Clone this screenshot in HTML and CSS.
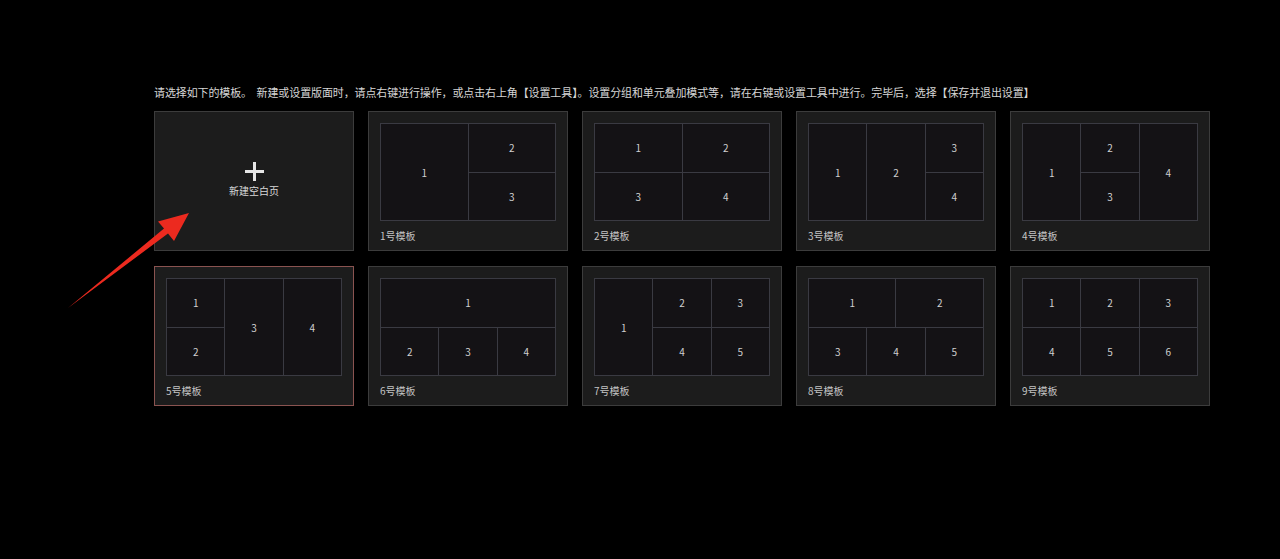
FILE: index.html
```html
<!DOCTYPE html>
<html lang="zh-CN">
	<head>
		<meta charset="UTF-8" />
		<meta name="viewport" content="width=device-width, initial-scale=1.0" />
		<title>选择模板</title>
		<link rel="stylesheet" href="styles.css">
	</head>
	<body>
		<div class="page">
			<p class="tip">请选择如下的模板。&nbsp; 新建或设置版面时，请点右键进行操作，或点击右上角【设置工具】。设置分组和单元叠加模式等，请在右键或设置工具中进行。完毕后，选择【保存并退出设置】</p>

			<div class="grid">
				<div class="card card-new">
					<svg class="plus" width="19" height="19" viewBox="0 0 19 19">
						<rect x="8" y="0" width="3" height="19" fill="#e6e6e6" />
						<rect x="0" y="8" width="19" height="3" fill="#e6e6e6" />
					</svg>
					<span class="new-text">新建空白页</span>
				</div>

				<div class="card">
					<div class="preview t1">
						<div class="cell tall">1</div>
						<div class="cell">2</div>
						<div class="cell">3</div>
					</div>
					<div class="name">1号模板</div>
				</div>

				<div class="card">
					<div class="preview t2">
						<div class="cell">1</div>
						<div class="cell">2</div>
						<div class="cell">3</div>
						<div class="cell">4</div>
					</div>
					<div class="name">2号模板</div>
				</div>

				<div class="card">
					<div class="preview t3">
						<div class="cell tall">1</div>
						<div class="cell tall">2</div>
						<div class="cell">3</div>
						<div class="cell">4</div>
					</div>
					<div class="name">3号模板</div>
				</div>

				<div class="card">
					<div class="preview t3">
						<div class="cell tall">1</div>
						<div class="cell">2</div>
						<div class="cell tall">4</div>
						<div class="cell">3</div>
					</div>
					<div class="name">4号模板</div>
				</div>

				<div class="card selected">
					<div class="preview t3">
						<div class="cell">1</div>
						<div class="cell tall">3</div>
						<div class="cell tall">4</div>
						<div class="cell">2</div>
					</div>
					<div class="name">5号模板</div>
				</div>

				<div class="card">
					<div class="preview t3">
						<div class="cell wide">1</div>
						<div class="cell">2</div>
						<div class="cell">3</div>
						<div class="cell">4</div>
					</div>
					<div class="name">6号模板</div>
				</div>

				<div class="card">
					<div class="preview t3">
						<div class="cell tall">1</div>
						<div class="cell">2</div>
						<div class="cell">3</div>
						<div class="cell">4</div>
						<div class="cell">5</div>
					</div>
					<div class="name">7号模板</div>
				</div>

				<div class="card">
					<div class="preview t8">
						<div class="cell half">1</div>
						<div class="cell half">2</div>
						<div class="cell third">3</div>
						<div class="cell third">4</div>
						<div class="cell third">5</div>
					</div>
					<div class="name">8号模板</div>
				</div>

				<div class="card">
					<div class="preview t3">
						<div class="cell">1</div>
						<div class="cell">2</div>
						<div class="cell">3</div>
						<div class="cell">4</div>
						<div class="cell">5</div>
						<div class="cell">6</div>
					</div>
					<div class="name">9号模板</div>
				</div>
			</div>
		</div>

		<svg class="arrow" width="1280" height="559" viewBox="0 0 1280 559">
			<polygon points="68,308 164,228.5 158,221.5 189,213 174,241 168,233.5" fill="#ec2a1f" />
		</svg>
	</body>
</html>
```

FILE: styles.css
```css
body {
	margin: 0;
	background-color: #000;
	font-family: "Noto Sans CJK SC", "Noto Sans", sans-serif;
	color: #cfcfcf;
	height: 559px;
	overflow: hidden;
	position: relative;
}

.page {
	padding: 85px 0 0 154px;
}

.tip {
	margin: 0 0 11px 0;
	font-size: 11px;
	line-height: 15px;
	letter-spacing: -0.12px;
	color: #d6d6d6;
	white-space: nowrap;
}

.grid {
	display: grid;
	grid-template-columns: repeat(5, 200px);
	grid-auto-rows: 140px;
	column-gap: 14px;
	row-gap: 15px;
}

.card {
	box-sizing: border-box;
	background-color: #1c1c1c;
	border: 1px solid #3c3c3c;
	padding: 11px;
}

.card.selected {
	border-color: #8a5350;
}

.card-new {
	display: flex;
	flex-direction: column;
	align-items: center;
	justify-content: center;
	padding-bottom: 14px;
}

.plus {
	display: block;
}

.new-text {
	font-size: 10px;
	line-height: 14px;
	margin-top: 3px;
	color: #d8d8d8;
}

.preview {
	box-sizing: border-box;
	width: 176px;
	height: 98px;
	display: grid;
	gap: 1px;
	background-color: #3a3a42;
	border: 1px solid #3a3a42;
}

.cell {
	background-color: #141215;
	display: flex;
	align-items: center;
	justify-content: center;
	font-size: 10px;
	color: #d0d0d0;
}

.t1,
.t2 {
	grid-template-columns: 1fr 1fr;
	grid-template-rows: 1fr 1fr;
}

.t3 {
	grid-template-columns: 1fr 1fr 1fr;
	grid-template-rows: 1fr 1fr;
}

.t8 {
	grid-template-columns: repeat(6, 1fr);
	grid-template-rows: 1fr 1fr;
}

.tall {
	grid-row: span 2;
}

.wide {
	grid-column: span 3;
}

.half {
	grid-column: span 3;
}

.third {
	grid-column: span 2;
}

.name {
	margin-top: 8px;
	font-size: 10px;
	line-height: 14px;
	color: #c4c4c4;
}

.arrow {
	position: absolute;
	top: 0;
	left: 0;
	pointer-events: none;
}
```
